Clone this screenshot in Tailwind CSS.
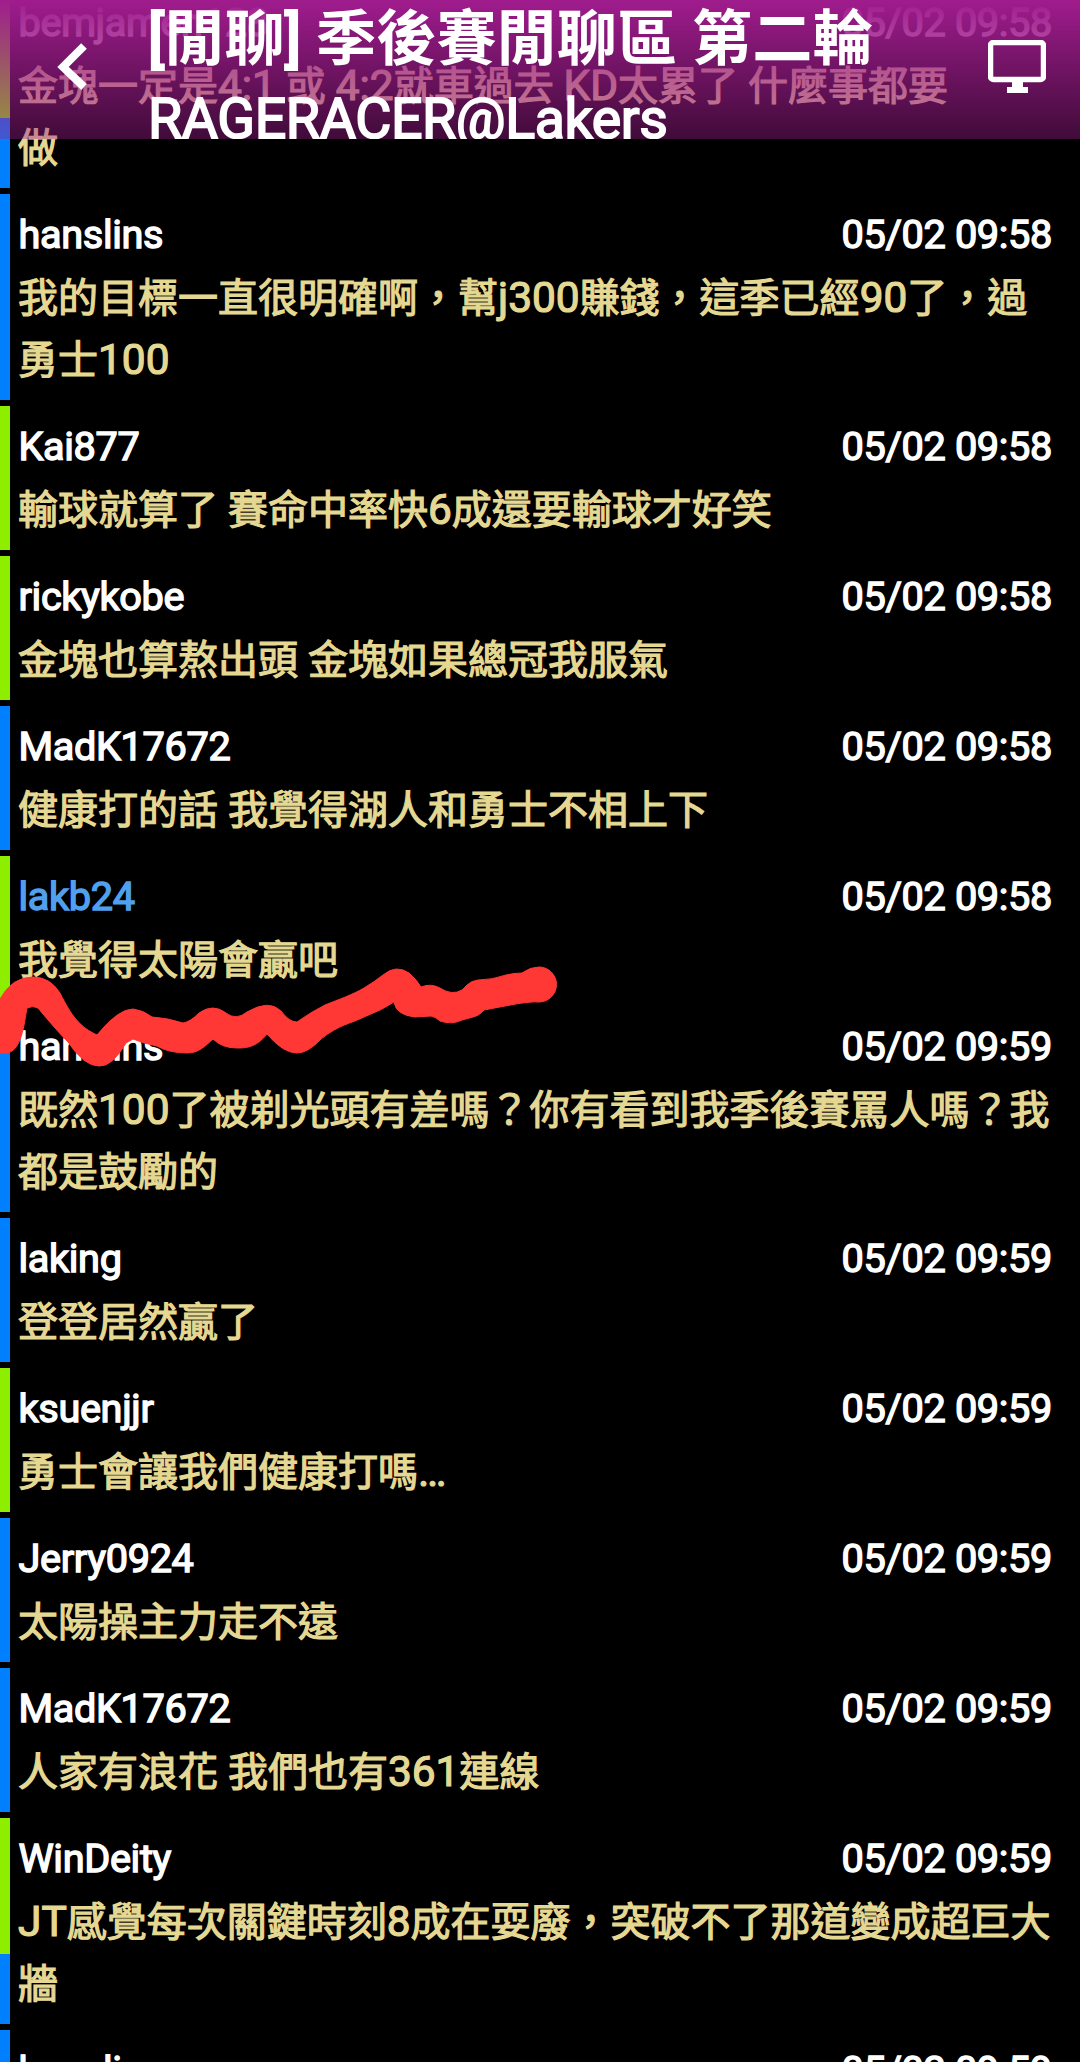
<!DOCTYPE html>
<html lang="zh-Hant"><head><meta charset="utf-8"><title>季後賽閒聊區</title>
<script src="https://cdn.jsdelivr.net/npm/@tailwindcss/browser@4"></script></head>
<body class="bg-black">
<div class="relative h-[2062px] w-[1080px] overflow-hidden bg-black font-[Roboto,'Noto_Sans_CJK_TC',sans-serif] text-[40px] leading-[62px] text-white">
<main id="list" class="-mt-[18px] flex flex-col gap-[6px] pt-0"></main>
<header class="absolute inset-x-0 top-0 flex h-[139px] overflow-hidden bg-linear-to-b from-[#a01c8e] to-[#a01c8e]/40">
<svg class="mt-[40px] ml-[54px] h-[56px] w-[36px] shrink-0" viewBox="0 0 36 56" fill="none" stroke="white" stroke-width="8"><path d="M30 6 L9 27 L30 47"/></svg>
<h1 class="ml-[58px] flex-1 text-[55.5px] leading-[80px] whitespace-nowrap"><span class="block text-[60.2px] font-bold"><span class="font-medium [-webkit-text-stroke:2px_white]">[</span>閒聊<span class="font-medium [-webkit-text-stroke:2px_white]">]</span> 季後賽閒聊區 第二輪</span><span class="block tracking-[-0.4px] [-webkit-text-stroke:1.8px_white]">RAGERACER@Lakers</span></h1>
<svg class="mt-[40px] mr-[34px] h-[56px] w-[58px] shrink-0" viewBox="0 0 58 56"><rect x="2.5" y="2.5" width="53" height="37" rx="3" fill="none" stroke="white" stroke-width="5.5"/><path d="M24 41h11v6h5v6H19v-6h5z" fill="white"/></svg>
</header>
<svg class="absolute top-[940px] left-0 h-[140px] w-[580px]" viewBox="0 940 580 140" fill="#ff3836" stroke="#ff3836" stroke-width="1" stroke-linejoin="round"><path d="M0 999 Q12 977 33 977 Q50 977 60 993 C72 1017 80 1027 97 1035 Q118 1009 133 1009 Q143 1010 152 1017 Q168 1018 183 1023 Q190 1022 199 1013 Q213 1003 226 1013 Q236 1021 247 1012 Q269 999 281 1011 Q289 1022 297 1022 Q311 1012 325 1005 C340 999 352 995 364 988 Q374 982 383 975 Q396 964 409 973 Q417 980 421 987 Q431 983 440 988 Q452 996 462 990 L467 985 Q471 981 478 980 Q492 980 506 975 Q514 973 522 973 Q530 967 539 967 A17.5 17.5 0 0 1 539 1002 Q530 1001 505 1006 L484 1010 Q479 1016 473 1017 L462 1020 Q452 1025 440 1021 Q436 1017 431 1016 L415 1017 Q396 1015 394 1002 Q382 1010 364 1017 C350 1024 340 1024 321 1039 Q308 1053 297 1053 Q283 1053 267 1034 C256 1048 245 1048 237 1048 Q222 1048 213 1039 C205 1046 199 1053 187 1053 Q169 1053 157 1046 Q145 1044 133 1039 L126 1043 Q112 1067 99 1066 Q84 1066 68 1042 Q57 1031 38 1008 Q33 1005 27 1008 C24 1023 22 1053 5 1053 L0 1053Z"/></svg>
</div>
<script>
const rows=[
['g','bemjamen128','05/02 09:58','金塊一定是4:1 或 4:2就車過去 KD太累了 什麼事都要<br>做',1],
['b','hanslins','05/02 09:58','我的目標一直很明確啊，幫j300賺錢，這季已經90了，過勇士100'],
['g','Kai877','05/02 09:58','輸球就算了 賽命中率快6成還要輸球才好笑'],
['g','rickykobe','05/02 09:58','金塊也算熬出頭 金塊如果總冠我服氣'],
['b','MadK17672','05/02 09:58','健康打的話 我覺得湖人和勇士不相上下'],
['g','lakb24','05/02 09:58','我覺得太陽會贏吧'],
['b','hanslins','05/02 09:59','既然100了被剃光頭有差嗎？你有看到我季後賽罵人嗎？我都是鼓勵的'],
['b','laking','05/02 09:59','登登居然贏了'],
['g','ksuenjjr','05/02 09:59','勇士會讓我們健康打嗎…'],
['b','Jerry0924','05/02 09:59','太陽操主力走不遠'],
['b','MadK17672','05/02 09:59','人家有浪花 我們也有361連線'],
['g','WinDeity','05/02 09:59','JT感覺每次關鍵時刻8成在耍廢，突破不了那道變成超巨大牆',1],
['b','hanslins','05/02 09:59','']];
const bar={g:'bg-[#8eee00]',b:'bg-[#0080ff]'};
// Latin runs are set slightly larger than the surrounding CJK text
const latin=s=>s.split('<br>').map(p=>p.replace(/[A-Za-z0-9:…]+/g,'<span class="text-[42.4px] leading-none">$&</span>')).join('<br>');
document.getElementById('list').innerHTML=rows.map(([c,n,t,m,split])=>`<article class="flex min-h-[144px]"><div class="flex w-[10px] shrink-0 flex-col"><i class="${split?'h-[136px]':'flex-1'} ${bar[c]}"></i>${split?'<i class="flex-1 bg-[#0080ff]"></i>':''}</div><div class="flex-1 pt-[10px] pb-[8px] pl-[8px]"><div class="flex justify-between pr-[28px] pl-[0.5px] text-[39.7px] tracking-[-0.35px] [-webkit-text-stroke:1.4px_currentColor]"><span class="${n==='lakb24'?'text-[#50a0ee]':''}">${n}</span><time>${t}</time></div><p class="mt-[2px] pr-[20px] break-all text-[#e5d893] [-webkit-text-stroke:1.2px_currentColor]">${latin(m)}</p></div></article>`).join('');
</script></body></html>
